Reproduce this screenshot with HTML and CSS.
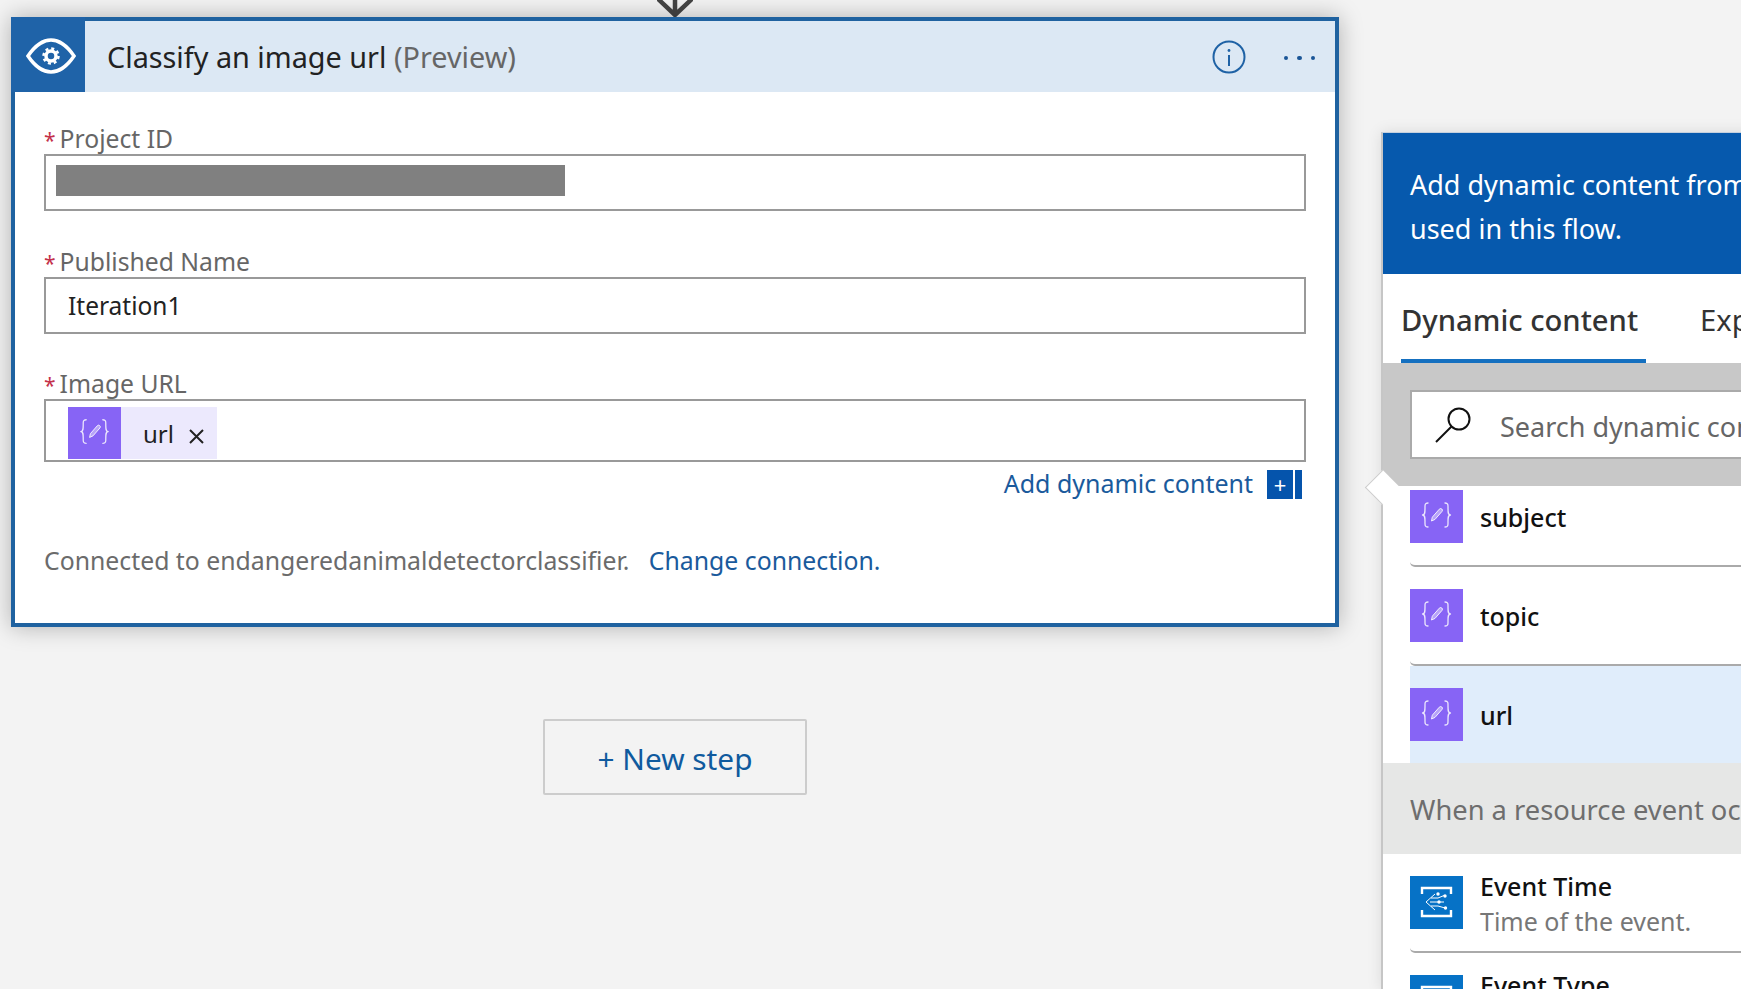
FILE: index.html
```html
<!DOCTYPE html>
<html lang="en">
<head>
  <meta charset="UTF-8">
  <meta name="viewport" content="width=device-width, initial-scale=1.0">
  <title>Classify an image url</title>
  <link rel="stylesheet" href="styles.css">
</head>
<body>

<svg class="defs" width="0" height="0">
  <symbol id="iconVar" viewBox="0 0 53 53">
    <g fill="none" stroke="#fff" stroke-width="1.300" stroke-linecap="round" stroke-linejoin="round" opacity="0.85">
      <path d="M18 13C14.500 13 15 15.500 15 18.500C15 22.500 15 25 12.500 25C15 25 15 27.500 15 31.500C15 34.500 14.500 37 18 37"/>
      <path d="M35 13C38.500 13 38 15.500 38 18.500C38 22.500 38 25 40.500 25C38 25 38 27.500 38 31.500C38 34.500 38.500 37 35 37"/>
    </g>
    <path d="M21.500 31l.8-3.800 7-8a1.500 1.500 0 0 1 2.700 2.200l-7 8z" fill="#fff" fill-opacity="0.45" stroke="#fff" stroke-width="1" stroke-linejoin="round" opacity="0.9"/>
  </symbol>
  <symbol id="iconEvent" viewBox="0 0 53 53">
    <g fill="none" stroke="#fff" stroke-width="2.400">
      <path d="M12 18V12H41V18"/>
      <path d="M12 34V40H41V34"/>
    </g>
    <g fill="none" stroke="#fff" stroke-width="1">
      <path d="M25 18L16 26L25 34"/>
      <path d="M20 26H34"/>
      <path d="M21 22H28L34 19.500"/>
      <path d="M21 30H28L35 32"/>
    </g>
    <g fill="#fff">
      <circle cx="28" cy="18" r="1.700"/>
      <circle cx="35" cy="20" r="1.700"/>
      <circle cx="29" cy="26" r="1.700"/>
      <circle cx="35.500" cy="32" r="1.700"/>
    </g>
  </symbol>
</svg>

<div class="page">

  <!-- Flow canvas -->
  <div class="flow">
    <svg class="arrow" width="36" height="17" viewBox="0 0 36 17">
      <path d="M18 -6V14M0 -2L18 15L36 -2" fill="none" stroke="#444" stroke-width="4.500"/>
    </svg>

    <div class="card">
      <div class="card-head">
        <div class="card-icon">
          <svg width="50" height="36" viewBox="0 0 50 36">
            <path d="M2 18C10 6 19 2 25 2S40 6 48 18C40 30 31 34 25 34S10 30 2 18Z" fill="none" stroke="#fff" stroke-width="3.500"/>
            <circle cx="25" cy="18" r="5" fill="none" stroke="#fff" stroke-width="3.500"/>
            <circle cx="25" cy="18" r="7.500" fill="none" stroke="#fff" stroke-width="2.500" stroke-dasharray="3 2.890"/>
          </svg>
        </div>
        <div class="card-title">Classify an image url <span class="preview">(Preview)</span></div>
        <svg class="info" width="34" height="34" viewBox="0 0 34 34">
          <circle cx="17" cy="17" r="15.500" fill="none" stroke="#1f62a5" stroke-width="2"/>
          <rect x="16" y="15" width="2" height="11" fill="#1f62a5"/>
          <circle cx="17" cy="10.500" r="1.400" fill="#1f62a5"/>
        </svg>
        <div class="dots"><span></span><span></span><span></span></div>
      </div>

      <div class="card-body">
        <div class="label"><span class="req">*</span>Project ID</div>
        <div class="input redacted"><div class="redact"></div></div>

        <div class="label next"><span class="req">*</span>Published Name</div>
        <div class="input">Iteration1</div>

        <div class="label last"><span class="req">*</span>Image URL</div>
        <div class="input tall">
          <div class="chip">
            <svg class="chip-icon" width="53" height="52"><use href="#iconVar"/></svg>
            <span class="chip-text">url</span>
            <svg class="chip-x" width="15" height="15" viewBox="0 0 15 15">
              <path d="M1 1L14 14M14 1L1 14" stroke="#222" stroke-width="2"/>
            </svg>
          </div>
        </div>

        <div class="add-row">
          <a class="link add-link">Add dynamic content</a>
          <div class="add-btn">+</div>
          <div class="add-bar"></div>
        </div>

        <div class="conn">
          Connected to endangeredanimaldetectorclassifier.
          <a class="link conn-link">Change connection.</a>
        </div>
      </div>
    </div>

    <button class="new-step">+ New step</button>
  </div>

  <!-- Dynamic content panel -->
  <div class="panel">
    <div class="tip"></div>
    <div class="panel-head">Add dynamic content from the apps and connectors<br>used in this flow.</div>

    <div class="tabs">
      <div class="tab active">Dynamic content</div>
      <div class="tab">Expression</div>
    </div>

    <div class="search-wrap">
      <div class="search">
        <svg width="36" height="36" viewBox="0 0 36 36">
          <circle cx="24" cy="12" r="10.500" fill="none" stroke="#111" stroke-width="2"/>
          <path d="M16.500 19.500L1 35" stroke="#111" stroke-width="2"/>
        </svg>
        <span class="placeholder">Search dynamic content</span>
      </div>
    </div>

    <div class="list">
      <div class="row first">
        <svg class="tile purple" width="53" height="53"><use href="#iconVar"/></svg>
        <div class="row-name">subject</div>
      </div>
      <div class="row">
        <svg class="tile purple" width="53" height="53"><use href="#iconVar"/></svg>
        <div class="row-name">topic</div>
      </div>
      <div class="row selected">
        <svg class="tile purple" width="53" height="53"><use href="#iconVar"/></svg>
        <div class="row-name">url</div>
      </div>
    </div>

    <div class="section">When a resource event occurs</div>

    <div class="list">
      <div class="row">
        <svg class="tile blue" width="53" height="53"><use href="#iconEvent"/></svg>
        <div class="row-text">
          <div class="row-title">Event Time</div>
          <div class="row-sub">Time of the event.</div>
        </div>
      </div>
      <div class="row">
        <svg class="tile blue" width="53" height="53"><use href="#iconEvent"/></svg>
        <div class="row-text">
          <div class="row-title">Event Type</div>
          <div class="row-sub">Type of the event.</div>
        </div>
      </div>
    </div>
  </div>

</div>

</body>
</html>
```

FILE: styles.css
```css
/* Page */
body {
  margin: 0;
  background-color: #f3f3f3;
  font-family: "Noto Sans", "Open Sans", sans-serif;
  color: #222;
}
.defs {
  position: absolute;
}
.page {
  display: flex;
  width: 1741px;
  height: 989px;
  overflow: hidden;
}
.link {
  color: #1a5a9c;
}

/* Flow column */
.flow {
  flex: none;
  display: flex;
  flex-direction: column;
  align-items: center;
  width: 1328px;
  margin-left: 11px;
}
.arrow {
  display: block;
}

/* Action card */
.card {
  box-sizing: border-box;
  width: 1328px;
  height: 610px;
  border: 4px solid #1f62a0;
  background-color: #fff;
  box-shadow: 0 0 22px rgba(0, 0, 0, 0.28);
}
.card-head {
  display: flex;
  align-items: center;
  height: 71px;
  background-color: #dce8f4;
}
.card-icon {
  box-sizing: border-box;
  display: flex;
  align-items: center;
  justify-content: center;
  width: 74px;
  height: 75px;
  margin: -4px 0 0 -4px;
  padding: 3px 0 0 5px;
  background-color: #1f63a8;
}
.card-title {
  flex: 1;
  margin-left: 22px;
  font-size: 28.8px;
  color: #222;
}
.preview {
  color: #666;
}
.info {
  margin-right: 38px;
}
.dots {
  display: flex;
  gap: 8.800px;
  margin: 3px 20px 0 0;
}
.dots span {
  width: 4.500px;
  height: 4.500px;
  border-radius: 50%;
  background-color: #1a5596;
}

.card-body {
  padding: 33px 29px 0;
}
.label {
  height: 29px;
  font-size: 24.7px;
  line-height: 27px;
  color: #666;
}
.label.next {
  margin-top: 37px;
}
.label.last {
  margin-top: 36px;
}
.req {
  margin-right: 4px;
  font-size: 21px;
  color: #c4314b;
}
.input {
  box-sizing: border-box;
  display: flex;
  align-items: center;
  height: 57px;
  padding-left: 22px;
  border: 2px solid #999;
  font-size: 24.5px;
}
.input.redacted {
  padding-left: 10px;
}
.input.tall {
  align-items: flex-start;
  height: 63px;
  padding-top: 6px;
}
.redact {
  width: 509px;
  height: 31px;
  margin-top: -4px;
  background-color: #808080;
}
.chip {
  display: flex;
  align-items: center;
  height: 52px;
  background-color: #ece9fd;
}
.chip-icon {
  background-color: #8764f5;
}
.chip-text {
  margin: 0 15px 0 22px;
  font-size: 24px;
}
.chip-x {
  margin: 6px 13px 0 0;
}

.add-row {
  display: flex;
  align-items: center;
  justify-content: flex-end;
  height: 29px;
  margin-top: 8px;
  padding-right: 4px;
  font-size: 25px;
}
.add-link {
  margin-top: -3px;
  line-height: 29px;
}
.add-btn {
  width: 26px;
  height: 29px;
  margin-left: 14px;
  background-color: #0554ac;
  color: #fff;
  font-size: 22px;
  line-height: 28px;
  text-align: center;
}
.add-bar {
  width: 7px;
  height: 29px;
  margin-left: 2px;
  background-color: #0554ac;
}
.conn {
  margin-top: 46px;
  height: 30px;
  font-size: 24.8px;
  line-height: 30px;
  color: #6b6b6b;
}
.conn-link {
  margin-left: 13px;
}

.new-step {
  width: 264px;
  height: 76px;
  margin-top: 92px;
  padding-top: 3px;
  border: 2px solid #ccc;
  border-radius: 2px;
  background-color: #f3f3f3;
  color: #0f5a9e;
  font-family: inherit;
  font-size: 29.8px;
}

/* Dynamic content panel */
.panel {
  position: relative;
  flex: none;
  width: 500px;
  height: 857px;
  margin: 132px 0 0 42px;
  border-top: 1px solid #c4d0de;
  border-left: 2px solid #c6c6c6;
  background-color: #fff;
  box-shadow: 0 0 14px rgba(0, 0, 0, 0.1);
}
.tip {
  position: absolute;
  left: -13px;
  top: 342px;
  width: 24px;
  height: 24px;
  border-left: 1px solid #ccc;
  border-bottom: 1px solid #ccc;
  background-color: #fff;
  transform: rotate(45deg);
}
.panel-head {
  box-sizing: border-box;
  height: 141px;
  padding: 30px 0 0 27px;
  background-color: #0659ad;
  color: #fff;
  font-size: 27px;
  line-height: 44px;
  white-space: nowrap;
}
.tabs {
  display: flex;
  gap: 54px;
  height: 89px;
  padding-left: 18px;
}
.tab {
  box-sizing: border-box;
  height: 89px;
  padding-top: 26px;
  font-size: 29.2px;
  color: #333;
  white-space: nowrap;
}
.tab.active {
  padding-right: 8px;
  border-bottom: 4px solid #1570c0;
  font-weight: 500;
}
.search-wrap {
  height: 123px;
  padding: 27px 0 0 27px;
  box-sizing: border-box;
  background-color: #c8c8c8;
}
.search {
  box-sizing: border-box;
  display: flex;
  align-items: center;
  gap: 29px;
  height: 69px;
  padding-left: 23px;
  border: 2px solid #aaa;
  background-color: #fff;
}
.placeholder {
  margin-top: 3px;
  font-size: 27px;
  color: #666;
  white-space: nowrap;
}

.list {
  padding-left: 27px;
}
.row {
  box-sizing: border-box;
  display: flex;
  align-items: flex-start;
  gap: 17px;
  height: 99px;
  padding-top: 22px;
  border-bottom: 2px solid #aaa;
  border-bottom-left-radius: 5px;
}
.row.first {
  height: 81px;
  padding-top: 4px;
}
.row.selected {
  height: 97px;
  border-bottom: none;
  border-radius: 0;
  background-color: #e0edfb;
}
.tile {
  flex: none;
}
.tile.purple {
  background-color: #8764f5;
}
.tile.blue {
  background-color: #0672c6;
}
.row-name {
  padding-top: 1px;
  font-size: 25px;
  font-weight: 500;
  line-height: 53px;
  color: #111;
}
.row-text {
  margin-top: -7px;
}
.row-title {
  font-size: 25px;
  font-weight: 500;
  line-height: 34px;
  color: #111;
}
.row-sub {
  font-size: 25px;
  line-height: 36px;
  color: #777;
}
.section {
  box-sizing: border-box;
  height: 91px;
  padding: 28px 0 0 27px;
  background-color: #e6e7e6;
  color: #6e6e6e;
  font-size: 27.3px;
  white-space: nowrap;
}
```
